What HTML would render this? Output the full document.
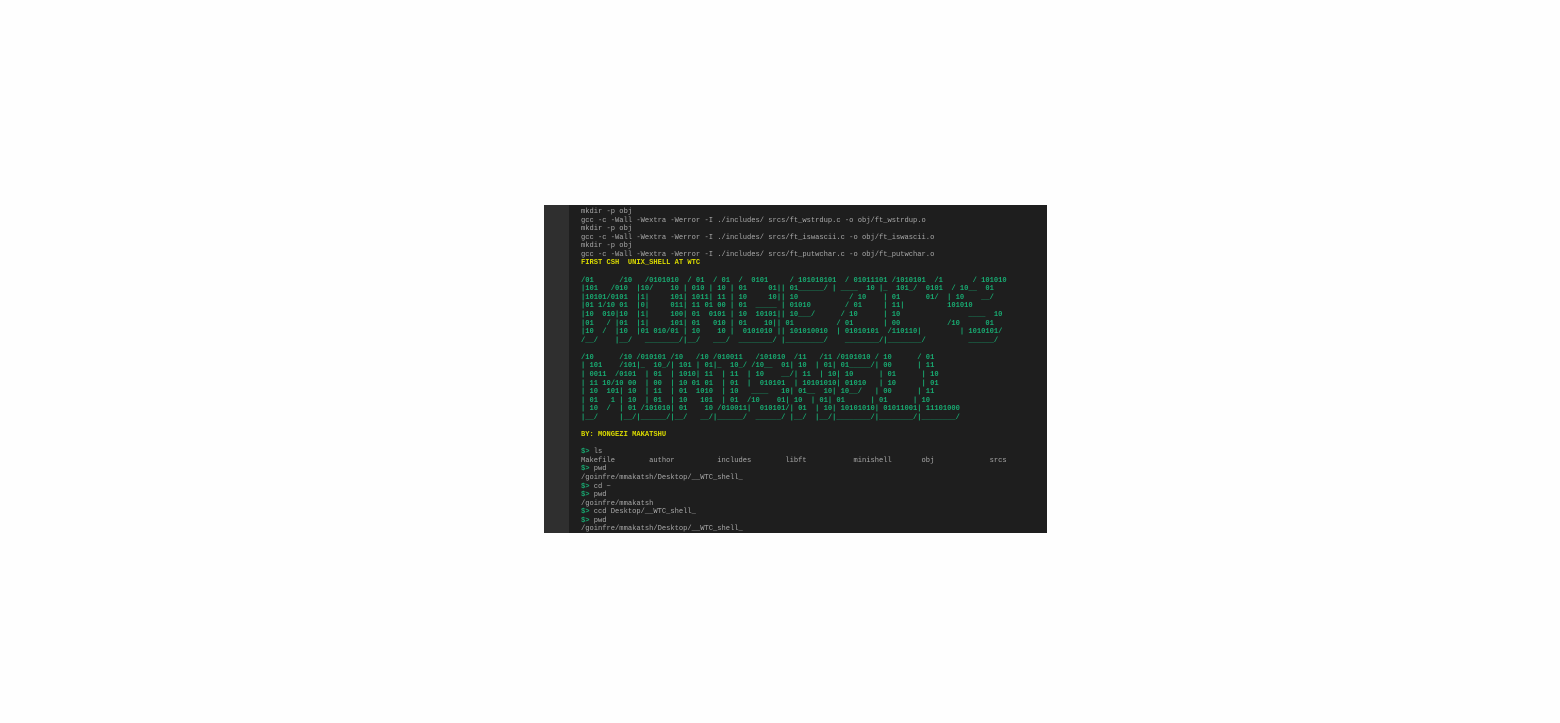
<!DOCTYPE html>
<html><head><meta charset="utf-8"><style>
html,body{margin:0;padding:0;background:#fefefe;width:1560px;height:723px;overflow:hidden}
#t{position:absolute;left:544px;top:205px;width:503px;height:328px;background:#1e1e1e;overflow:hidden}
#g{position:absolute;left:0;top:0;width:25px;height:328px;background:#2f2f2f}
pre{position:absolute;left:37px;top:3px;margin:0;font-family:"Liberation Mono",monospace;font-size:7.1px;line-height:8.58px;color:#a9a9a9;white-space:pre}
.y{color:#dada00;font-weight:bold}.g{color:#18a870;font-weight:bold}
</style></head><body><div id="t"><div id="g"></div><pre>mkdir -p obj
gcc -c -Wall -Wextra -Werror -I ./includes/ srcs/ft_wstrdup.c -o obj/ft_wstrdup.o
mkdir -p obj
gcc -c -Wall -Wextra -Werror -I ./includes/ srcs/ft_iswascii.c -o obj/ft_iswascii.o
mkdir -p obj
gcc -c -Wall -Wextra -Werror -I ./includes/ srcs/ft_putwchar.c -o obj/ft_putwchar.o
<span class="y">FIRST CSH  UNIX_SHELL AT WTC</span>

<span class="g">/01      /10   /0101010  / 01  / 01  /  0101     / 101010101  / 01011101 /1010101  /1       / 101010
|101   /010  |10/    10 | 010 | 10 | 01     01|| 01______/ | ____  10 |_  101_/  0101  / 10__  01
|10101/0101  |1|     101| 1011| 11 | 10     10|| 10            / 10    | 01      01/  | 10    __/
|01 1/10 01  |0|     011| 11 01 00 | 01  _____ | 01010        / 01     | 11|          101010
|10  010|10  |1|     100| 01  0101 | 10  10101|| 10___/      / 10      | 10                ____  10
|01   / |01  |1|     101| 01   010 | 01    10|| 01          / 01       | 00           /10      01
|10  /  |10  |01 010/01 | 10    10 |  0101010 || 101010010  | 01010101  /110110|         | 1010101/
/__/    |__/   ________/|__/   ___/  ________/ |_________/    ________/|________/          ______/

/10      /10 /010101 /10   /10 /010011   /101010  /11   /11 /0101010 / 10      / 01
| 101    /101|_  10_/| 101 | 01|_  10_/ /10__  01| 10  | 01| 01_____/| 00      | 11
| 0011  /0101  | 01  | 1010| 11  | 11  | 10    __/| 11  | 10| 10      | 01      | 10
| 11 10/10 00  | 00  | 10 01 01  | 01  |  010101  | 10101010| 01010   | 10      | 01
| 10  101| 10  | 11  | 01  1010  | 10   ____   10| 01__  10| 10__/   | 00      | 11
| 01   1 | 10  | 01  | 10   101  | 01  /10    01| 10  | 01| 01      | 01      | 10
| 10  /  | 01 /101010| 01    10 /010011|  010101/| 01  | 10| 10101010| 01011001| 11101000
|__/     |__/|______/|__/   __/|______/  ______/ |__/  |__/|________/|________/|________/</span>

<span class="y">BY: MONGEZI MAKATSHU</span>

<span class="g">$&gt;</span> ls
Makefile        author          includes        libft           minishell       obj             srcs
<span class="g">$&gt;</span> pwd
/goinfre/mmakatsh/Desktop/__WTC_shell_
<span class="g">$&gt;</span> cd ~
<span class="g">$&gt;</span> pwd
/goinfre/mmakatsh
<span class="g">$&gt;</span> ccd Desktop/__WTC_shell_
<span class="g">$&gt;</span> pwd
/goinfre/mmakatsh/Desktop/__WTC_shell_</pre></div></body></html>
